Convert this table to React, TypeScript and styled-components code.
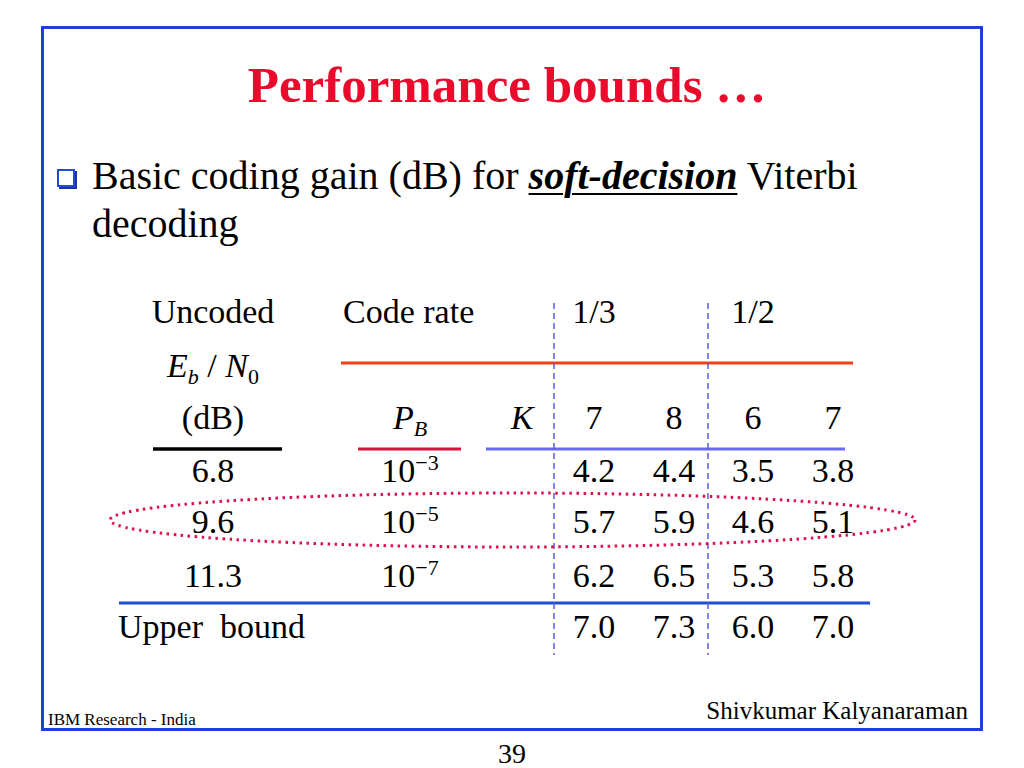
import React from "react"
import styled, { createGlobalStyle } from "styled-components"

const GlobalStyle = createGlobalStyle`
  html, body {
    margin: 0;
    padding: 0;
    background: #ffffff;
  }
  body {
    font-family: "Liberation Serif", "Times New Roman", serif;
    color: #000000;
  }
`

const Slide = styled.div`
  width: 1024px;
  height: 768px;
  box-sizing: border-box;
  padding-top: 26px;
  display: flex;
  flex-direction: column;
`

const Frame = styled.div`
  margin-left: 41px;
  width: 942px;
  height: 707px;
  box-sizing: border-box;
  border: 3px solid #1f3fd6;
  display: flex;
  flex-direction: column;
`

const Title = styled.h1`
  margin: 26px 0 0;
  padding-right: 10px;
  font-size: 51px;
  line-height: 60px;
  font-weight: bold;
  color: #ea0a2c;
  text-align: center;
`

const Bullet = styled.div`
  margin-top: 37px;
  padding-left: 13px;
  display: flex;
  align-items: flex-start;
`

const BulletMark = styled.span`
  flex: none;
  width: 14px;
  height: 14px;
  margin-top: 17px;
  border: 2px solid #2448e0;
  box-shadow: 2px 2px 0 #1a34a8;
`

const BulletText = styled.p`
  margin: 0 0 0 17px;
  width: 800px;
  font-size: 40px;
  line-height: 48px;
`

const Emph = styled.em`
  font-weight: bold;
  text-decoration: underline;
  text-decoration-thickness: 2px;
  text-underline-offset: 4px;
`

const TableWrap = styled.div`
  position: relative;
  margin: 38px 0 0 69px;
`

const Grid = styled.div`
  display: grid;
  grid-template-columns: 200px 194px 30px 114px 46px 112px 48px;
  grid-template-rows: 54px 52px 53px 51px 54px 51px 52px;
  font-size: 34px;
  line-height: 52px;
`

const Cell = styled.div<{ $col: number; $row: number; $span?: number; $left?: number }>`
  grid-column: ${({ $col, $span }) => `${$col} / span ${$span || 1}`};
  grid-row: ${({ $row }) => $row};
  text-align: ${({ $left }) => ($left !== undefined ? "left" : "center")};
  padding-left: ${({ $left }) => ($left !== undefined ? `${$left}px` : "0")};
  white-space: pre;
`

const Ital = styled.i`
  font-style: italic;
`

const Sub = styled.sub<{ $italic?: boolean }>`
  font-size: 22px;
  line-height: 0;
  vertical-align: -7px;
  font-style: ${({ $italic }) => ($italic ? "italic" : "normal")};
`

const Sup = styled.sup`
  font-size: 22px;
  line-height: 0;
  vertical-align: 12px;
`

const Overlay = styled.svg`
  position: absolute;
  left: 0;
  top: 0;
  width: 1px;
  height: 1px;
  overflow: visible;
  pointer-events: none;
`

const Footer = styled.div`
  margin-top: auto;
  padding: 0 12px 0 4px;
  display: flex;
  justify-content: space-between;
  align-items: flex-end;
`

const FooterLeft = styled.span`
  font-size: 17px;
  line-height: 17px;
`

const FooterRight = styled.span`
  font-size: 25px;
  line-height: 25px;
  margin-bottom: 5px;
`

const PageNumber = styled.div`
  margin-top: 9px;
  font-size: 28px;
  line-height: 28px;
  text-align: center;
`

const rows = [
  { eb: "6.8", exp: "3", vals: ["4.2", "4.4", "3.5", "3.8"] },
  { eb: "9.6", exp: "5", vals: ["5.7", "5.9", "4.6", "5.1"] },
  { eb: "11.3", exp: "7", vals: ["6.2", "6.5", "5.3", "5.8"] },
]

const constraints = ["7", "8", "6", "7"]
const upper = ["7.0", "7.3", "6.0", "7.0"]

export default function App() {
  return (
    <>
      <GlobalStyle />
      <Slide>
        <Frame>
          <Title>Performance bounds …</Title>
          <Bullet>
            <BulletMark />
            <BulletText>
              Basic coding gain (dB) for <Emph>soft-decision</Emph> Viterbi decoding
            </BulletText>
          </Bullet>

          <TableWrap>
            <Grid>
              <Cell $col={1} $row={1}>Uncoded</Cell>
              <Cell $col={2} $row={1} $span={2} $left={30}>Code rate</Cell>
              <Cell $col={4} $row={1}>1/3</Cell>
              <Cell $col={6} $row={1}>1/2</Cell>

              <Cell $col={1} $row={2}>
                <Ital>E</Ital>
                <Sub $italic>b</Sub> / <Ital>N</Ital>
                <Sub>0</Sub>
              </Cell>

              <Cell $col={1} $row={3}>(dB)</Cell>
              <Cell $col={2} $row={3}>
                <Ital>P</Ital>
                <Sub $italic>B</Sub>
              </Cell>
              <Cell $col={3} $row={3}>
                <Ital>K</Ital>
              </Cell>
              {constraints.map((k, i) => (
                <Cell key={i} $col={4 + i} $row={3}>{k}</Cell>
              ))}

              {rows.map((r, ri) => (
                <React.Fragment key={r.eb}>
                  <Cell $col={1} $row={4 + ri}>{r.eb}</Cell>
                  <Cell $col={2} $row={4 + ri}>
                    10<Sup>−{r.exp}</Sup>
                  </Cell>
                  {r.vals.map((v, i) => (
                    <Cell key={i} $col={4 + i} $row={4 + ri}>{v}</Cell>
                  ))}
                </React.Fragment>
              ))}

              <Cell $col={1} $row={7} $span={2} $left={5}>Upper  bound</Cell>
              {upper.map((v, i) => (
                <Cell key={i} $col={4 + i} $row={7}>{v}</Cell>
              ))}
            </Grid>

            <Overlay>
              <g transform="translate(-113,-286)">
                <line x1={341} y1={363} x2={853} y2={363} stroke="#f2401a" strokeWidth={3} />
                <line x1={153} y1={449} x2={282} y2={449} stroke="#000000" strokeWidth={3.5} />
                <line x1={358} y1={449} x2={461} y2={449} stroke="#d8103a" strokeWidth={3} />
                <line x1={486} y1={449} x2={845} y2={449} stroke="#6a6aee" strokeWidth={3} />
                <line x1={119} y1={603} x2={870} y2={603} stroke="#1f4fd0" strokeWidth={3} />
                <line x1={554} y1={303} x2={554} y2={655} stroke="#5a5ae0" strokeWidth={1.5} strokeDasharray="6 4" />
                <line x1={708} y1={303} x2={708} y2={655} stroke="#5a5ae0" strokeWidth={1.5} strokeDasharray="6 4" />
                <ellipse cx={512.5} cy={520} rx={402.5} ry={27} fill="none" stroke="#e0104a" strokeWidth={3} strokeDasharray="2.5 4.5" />
              </g>
            </Overlay>
          </TableWrap>

          <Footer>
            <FooterLeft>IBM Research - India</FooterLeft>
            <FooterRight>Shivkumar Kalyanaraman</FooterRight>
          </Footer>
        </Frame>
        <PageNumber>39</PageNumber>
      </Slide>
    </>
  )
}
